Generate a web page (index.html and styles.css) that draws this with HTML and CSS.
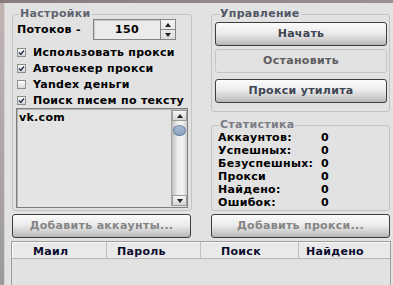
FILE: index.html
```html
<!DOCTYPE html>
<html lang="ru">
<head>
<meta charset="utf-8">
<title>Настройки</title>
<link rel="stylesheet" href="styles.css">
</head>
<body>
<div class="titlebar"></div>
<div class="main">
  <div class="edge"></div>
  <div class="window">
    <div class="top">
      <div class="col">
        <fieldset class="group settings">
          <legend>Настройки</legend>
          <div class="threads">
            <span class="threads-label">Потоков -</span>
            <div class="spin">
              <span class="spin-val">150</span>
              <div class="spin-btns">
                <span class="spin-half"><span class="tri tri-up"></span></span>
                <span class="spin-half"><span class="tri tri-down"></span></span>
              </div>
            </div>
          </div>
          <ul class="checks">
            <li><span class="cb"><svg width="9" height="9" viewBox="0 0 9 9"><path d="M2 4.5 L3.8 6.3 L7 2.5" fill="none" stroke="#34405a" stroke-width="1.6"/></svg></span>Использовать прокси</li>
            <li><span class="cb"><svg width="9" height="9" viewBox="0 0 9 9"><path d="M2 4.5 L3.8 6.3 L7 2.5" fill="none" stroke="#34405a" stroke-width="1.6"/></svg></span>Авточекер прокси</li>
            <li><span class="cb"></span>Yandex деньги</li>
            <li><span class="cb"><svg width="9" height="9" viewBox="0 0 9 9"><path d="M2 4.5 L3.8 6.3 L7 2.5" fill="none" stroke="#34405a" stroke-width="1.6"/></svg></span>Поиск писем по тексту</li>
          </ul>
          <div class="listbox">
            <div class="list-text">vk.com</div>
            <div class="vscroll">
              <span class="vs-btn"><span class="tri tri-up"></span></span>
              <span class="thumb"></span>
              <span class="vs-track"></span>
              <span class="vs-btn"><span class="tri tri-down"></span></span>
            </div>
          </div>
        </fieldset>
        <button class="btn btn-dim btn-left">Добавить аккаунты...</button>
      </div>
      <div class="col">
        <fieldset class="group control">
          <legend>Управление</legend>
          <button class="btn">Начать</button>
          <button class="btn btn-off">Остановить</button>
          <button class="btn btn-gap">Прокси утилита</button>
        </fieldset>
        <fieldset class="group stats">
          <legend>Статистика</legend>
          <div class="stat-grid">
            <span>Аккаунтов:</span><span>0</span>
            <span>Успешных:</span><span>0</span>
            <span>Безуспешных:</span><span>0</span>
            <span>Прокси</span><span>0</span>
            <span>Найдено:</span><span>0</span>
            <span>Ошибок:</span><span>0</span>
          </div>
        </fieldset>
        <button class="btn btn-dim">Добавить прокси...</button>
      </div>
    </div>
    <div class="table">
      <div class="thead">
        <div class="th th-mail">Маил</div>
        <div class="th th-pass">Пароль</div>
        <div class="th th-search">Поиск</div>
        <div class="th th-found">Найдено</div>
      </div>
    </div>
  </div>
</div>
</body>
</html>
```

FILE: styles.css
```css
* { box-sizing: border-box; }
html, body { margin: 0; height: 100%; }
body {
  background: #e2e2e2;
  font: bold 11px/13px "DejaVu Sans", Verdana, sans-serif;
  letter-spacing: 0.3px;
  white-space: nowrap;
  color: #000;
  overflow: hidden;
  display: flex;
  flex-direction: column;
}
.titlebar {
  height: 3px;
  flex: none;
  background: linear-gradient(90deg, #8a7c7c, #9a9090);
}
.main { flex: 1; display: flex; min-height: 0; }
.edge {
  width: 4px;
  flex: none;
  background: linear-gradient(180deg, #c2b3b3 0%, #b4a9a9 40%, #9c9a9a 100%);
}
.window {
  flex: 1;
  border-left: 1px solid #d0d0d0;
  padding: 5px 0 0 6px;
  display: flex;
  flex-direction: column;
}
.top {
  display: grid;
  grid-template-columns: 180px 179px;
  column-gap: 19px;
  margin-left: 1px;
}
.col { display: flex; flex-direction: column; }

.group {
  margin: 0;
  min-width: 0;
  border: 1px solid #c4c4c4;
  border-radius: 3px;
}
.group legend {
  padding: 0 1px;
  line-height: 12px;
  font-size: 11px;
  color: #5f6472;
}

/* settings */
.settings { height: 203px; padding: 0 3px 2px 3px; }
.settings legend { margin-left: 3px; }
.threads { display: flex; align-items: center; height: 21px; margin-top: -1px; }
.threads-label { width: 76px; margin-left: 1px; flex: none; }
.spin {
  width: 83px;
  height: 21px;
  display: flex;
  border: 1px solid #858585;
  box-shadow: inset 1px 1px 0 #c9c9c9;
  background: #ebebeb;
}
.spin-val { flex: 1; text-align: center; line-height: 19px; }
.spin-btns {
  width: 15px;
  display: flex;
  flex-direction: column;
  border-left: 1px solid #858585;
  background: linear-gradient(#f6f6f6, #dedede);
}
.spin-half { flex: 1; display: flex; align-items: center; justify-content: center; }
.spin-half + .spin-half { border-top: 1px solid #8a8a8a; }
.tri { width: 0; height: 0; border-left: 3px solid transparent; border-right: 3px solid transparent; }
.tri-up { border-bottom: 4px solid #222; }
.tri-down { border-top: 4px solid #222; }

.checks { list-style: none; margin: 4px 0 0; padding: 0; }
.checks li { display: flex; align-items: center; height: 16px; }
.cb {
  width: 9px;
  height: 9px;
  margin: 0 7px 0 1px;
  flex: none;
  border: 1px solid #8e8e8e;
  background: linear-gradient(#fdfdfd, #d8d8d8);
  display: flex;
  align-items: center;
  justify-content: center;
}
.cb svg { display: block; margin: -1px; }

.listbox {
  height: 100px;
  display: flex;
  border: 1px solid #7e7e7e;
  box-shadow: inset 1px 1px 0 #b8b8b8;
  background: #e4e4e4;
}
.list-text { flex: 1; padding: 2px 0 0 2px; }
.vscroll {
  width: 16px;
  margin: 1px 0;
  display: flex;
  flex-direction: column;
  border-left: 1px solid #a4a4a4;
  background: linear-gradient(90deg, #bdbdbd, #ededed 35%, #f3f3f3 70%, #cfcfcf);
}
.vs-btn {
  height: 11px;
  flex: none;
  display: flex;
  align-items: center;
  justify-content: center;
  border: 1px solid #9b9b9b;
  background: linear-gradient(#f6f6f6, #d4d4d4);
}
.thumb {
  height: 11px;
  margin: 4px 1px 0;
  flex: none;
  border-radius: 50%;
  border: 1px solid #6b82a2;
  background: linear-gradient(#a9bbd2, #8aa0bd);
}
.vs-track { flex: 1; }

/* buttons */
.btn {
  display: block;
  width: 100%;
  height: 24px;
  padding: 0;
  margin: 0;
  border: 1px solid #3e3e3e;
  border-radius: 3px;
  background: linear-gradient(#fbfbfb, #ececec 45%, #c8c8c8 85%, #b4b4b4);
  font: inherit;
  letter-spacing: inherit;
  line-height: 22px;
  color: #3e4553;
  text-align: center;
}
.btn-off {
  margin-top: 3px;
  border-color: #c6c6c6;
  background: transparent;
  color: #5d5d5d;
}
.btn-gap { margin-top: 6px; }
.btn-dim { margin-top: 3px; color: #858585; }
.btn-left { width: 179px; }

/* control */
.control { height: 104px; padding: 2px 2px 8px 3px; }
.control legend { margin-left: 4px; color: #515766; }

/* stats */
.stats { height: 92px; margin-top: 7px; padding: 0 3px 1px 6px; }
.stats legend { margin-left: 1px; color: #7a7c86; }
.stat-grid { display: grid; grid-template-columns: 103px 1fr; line-height: 13px; }

/* table */
.table {
  width: 380px;
  flex: 1;
  margin-top: 3px;
  border: 1px solid #9d9d9d;
  border-bottom: none;
  background: #e2e2e2;
}
.thead {
  display: grid;
  grid-template-columns: 95px 94px 98px 1fr;
  height: 17px;
  border-bottom: 1px solid #b6b6b6;
  background: #e9e9e9;
  box-shadow: inset 1px 1px 0 #fafafa;
  color: #0c0c2e;
}
.th { padding-top: 3px; line-height: 13px; border-right: 1px solid #c0c0c0; }
.th-found { border-right: none; padding-left: 7px; }
.th-mail { padding-left: 21px; }
.th-pass { padding-left: 10px; }
.th-search { padding-left: 20px; }
```
